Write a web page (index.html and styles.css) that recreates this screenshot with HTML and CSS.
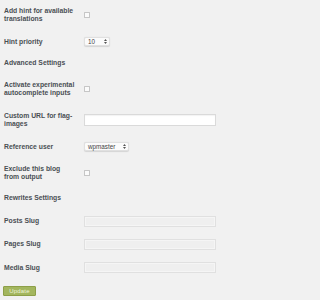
FILE: index.html
```html
<!DOCTYPE html>
<html>
<head>
<meta charset="utf-8">
<link rel="stylesheet" href="styles.css">
</head>
<body>
<form class="settings">
  <div class="row h26">
    <label class="label">Add hint for available translations</label>
    <input class="check" type="checkbox">
  </div>
  <div class="row h27">
    <label class="label">Hint priority</label>
    <div class="select sel-prio"><span>10</span><svg class="arrows" width="3" height="5" viewBox="0 0 3 5"><path d="M0 2 L1.5 0 L3 2 Z M0 3 L1.5 5 L3 3 Z" fill="#555"/></svg></div>
  </div>
  <h3 class="section h16">Advanced Settings</h3>
  <div class="row h35">
    <label class="label">Activate experimental autocomplete inputs</label>
    <input class="check" type="checkbox">
  </div>
  <div class="row h28">
    <label class="label">Custom URL for flag-images</label>
    <input class="text url" type="text">
  </div>
  <div class="row h25">
    <label class="label">Reference user</label>
    <div class="select sel-user"><span>wpmaster</span><svg class="arrows" width="3" height="5" viewBox="0 0 3 5"><path d="M0 2 L1.5 0 L3 2 Z M0 3 L1.5 5 L3 3 Z" fill="#555"/></svg></div>
  </div>
  <div class="row h28">
    <label class="label">Exclude this blog from output</label>
    <input class="check" type="checkbox">
  </div>
  <h3 class="section h22">Rewrites Settings</h3>
  <div class="row h24">
    <label class="label">Posts Slug</label>
    <input class="text slug" type="text">
  </div>
  <div class="row h22">
    <label class="label">Pages Slug</label>
    <input class="text slug" type="text">
  </div>
  <div class="row h25">
    <label class="label">Media Slug</label>
    <input class="text slug" type="text">
  </div>
  <button class="update" type="button">Update</button>
</form>
</body>
</html>
```

FILE: styles.css
```css
html, body {
  margin: 0;
  background: #f1f1f1;
}
body {
  padding: 2px 0 0 4px;
  font-family: "Liberation Sans", Arial, sans-serif;
  color: #4a4f54;
}
.settings {
  display: flex;
  flex-direction: column;
  align-items: flex-start;
  margin: 0;
}
.row {
  display: grid;
  grid-template-columns: 72px 1fr;
  column-gap: 8px;
  align-items: center;
  width: 212px;
}
.h16 { height: 16px; }
.h22 { height: 22px; }
.h24 { height: 24px; }
.h25 { height: 25px; }
.h26 { height: 26px; }
.h27 { height: 27px; }
.h28 { height: 28px; }
.h35 { height: 35px; }
.label {
  font-size: 6.8px;
  font-weight: bold;
  line-height: 8px;
}
.section {
  margin: 0;
  font-size: 6.8px;
  font-weight: bold;
  line-height: 8px;
  display: flex;
  align-items: center;
}
.check {
  -webkit-appearance: none;
  appearance: none;
  margin: 0;
  width: 6px;
  height: 6px;
  box-sizing: border-box;
  border: 1px solid #c6c6c6;
  background: #fbfbfb;
  border-radius: 0.5px;
}
.select {
  box-sizing: border-box;
  height: 9px;
  display: flex;
  align-items: center;
  justify-content: space-between;
  padding: 0 2px 0 3px;
  background: #fbfbfb;
  border: 1px solid #e0e0e0;
  border-radius: 2px;
  box-shadow: 0 0.5px 1px rgba(0, 0, 0, 0.12);
  font-size: 6.3px;
  color: #444;
}
.sel-prio { width: 26px; }
.sel-user { width: 45px; }
.arrows { display: block; }
.text {
  margin: 0;
  box-sizing: border-box;
  width: 132px;
  padding: 0;
  border: 1px solid #dadada;
}
.url {
  height: 12px;
  background: #fff;
  box-shadow: inset 0 1px 1px rgba(0, 0, 0, 0.05);
}
.slug {
  height: 11px;
  background: #efefef;
  border-color: #e0e0e0;
  box-shadow: inset 0 0 0 1px #f5f5f5;
}
.update {
  margin: 6px 0 0 -1px;
  box-sizing: border-box;
  width: 33px;
  height: 10px;
  padding: 0;
  border: 1px solid #8d9f48;
  border-radius: 1px;
  background: #a3b65e;
  color: #eef4dc;
  font-family: "Liberation Sans", Arial, sans-serif;
  font-size: 6px;
  line-height: 8px;
  letter-spacing: 0.2px;
}
```
